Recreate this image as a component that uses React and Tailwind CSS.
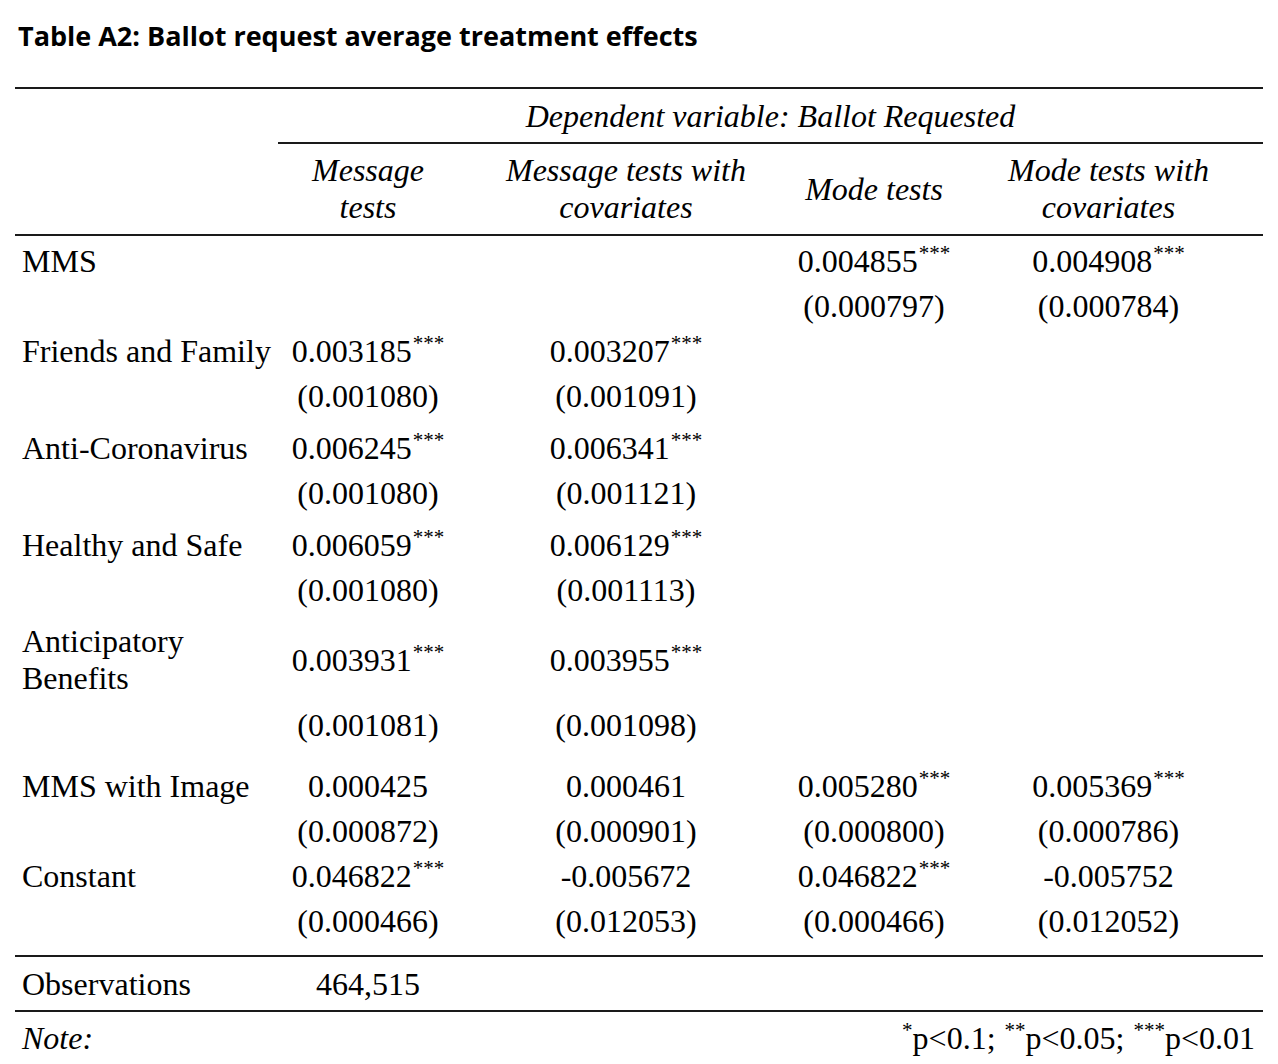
import React from 'react';

const serif = { fontFamily: '"Liberation Serif", "Times New Roman", serif' };

const cols = 'grid grid-cols-[263px_180px_336px_160px_309px] items-center';

const Stars = ({ n }) =>
  n ? <span className="text-[21px] relative -top-[12px] ml-[1px]">{'*'.repeat(n)}</span> : null;

const Cell = ({ v }) => {
  if (!v) return <div />;
  const [num, stars] = Array.isArray(v) ? v : [v, 0];
  return (
    <div className="text-center whitespace-nowrap">
      {num}
      <Stars n={stars} />
    </div>
  );
};

// one coefficient line + one standard error line
const Block = ({ label, coefs, ses, className = '' }) => (
  <div className={className}>
    <div className={`${cols} h-[45px]`}>
      <div className="pl-[7px] whitespace-nowrap">{label}</div>
      {coefs.map((c, i) => <Cell key={i} v={c} />)}
    </div>
    <div className={`${cols} h-[45px]`}>
      <div />
      {ses.map((c, i) => <Cell key={i} v={c} />)}
    </div>
  </div>
);

export default function App() {
  return (
    <div className="w-[1278px] h-[1064px] bg-white text-black overflow-hidden">
      {/* Title */}
      <div
        className="pt-[20px] pl-[18px] h-[52px] text-[27px] leading-[32px] font-bold"
        style={{ fontFamily: '"Open Sans", "Noto Sans", sans-serif' }}
      >
        Table A2: Ballot request average treatment effects
      </div>

      <div className="ml-[15px] mt-[35px] w-[1248px] text-[32px]" style={serif}>
        <div className="h-[2px] bg-[#1a1a1a]" />

        {/* Dependent variable */}
        <div className="flex h-[53px]">
          <div className="w-[263px]" />
          <div className="flex-1 flex items-center justify-center italic">
            Dependent variable: Ballot Requested
          </div>
        </div>
        <div className="ml-[263px] h-[2px] bg-[#1a1a1a]" />

        {/* Column headers */}
        <div className={`${cols} h-[90px] italic leading-[37px]`}>
          <div />
          <div className="text-center">Message<br />tests</div>
          <div className="text-center">Message tests with<br />covariates</div>
          <div className="text-center">Mode tests</div>
          <div className="text-center">Mode tests with<br />covariates</div>
        </div>
        <div className="h-[2px] bg-[#1a1a1a]" />

        <Block
          className="mt-[1px]"
          label="MMS"
          coefs={[null, null, ['0.004855', 3], ['0.004908', 3]]}
          ses={[null, null, '(0.000797)', '(0.000784)']}
        />
        <Block
          label="Friends and Family"
          coefs={[['0.003185', 3], ['0.003207', 3], null, null]}
          ses={['(0.001080)', '(0.001091)', null, null]}
        />
        <Block
          className="mt-[7px]"
          label="Anti-Coronavirus"
          coefs={[['0.006245', 3], ['0.006341', 3], null, null]}
          ses={['(0.001080)', '(0.001121)', null, null]}
        />
        <Block
          className="mt-[7px]"
          label="Healthy and Safe"
          coefs={[['0.006059', 3], ['0.006129', 3], null, null]}
          ses={['(0.001080)', '(0.001113)', null, null]}
        />

        {/* Anticipatory Benefits: wrapped label */}
        <div className={`${cols} h-[78px] mt-[10px]`}>
          <div className="pl-[7px] leading-[37px]">Anticipatory<br />Benefits</div>
          <Cell v={['0.003931', 3]} />
          <Cell v={['0.003955', 3]} />
          <div />
          <div />
        </div>
        <div className={`${cols} h-[45px] mt-[2px]`}>
          <div />
          <Cell v="(0.001081)" />
          <Cell v="(0.001098)" />
          <div />
          <div />
        </div>

        <Block
          className="mt-[16px]"
          label="MMS with Image"
          coefs={['0.000425', '0.000461', ['0.005280', 3], ['0.005369', 3]]}
          ses={['(0.000872)', '(0.000901)', '(0.000800)', '(0.000786)']}
        />
        <Block
          label="Constant"
          coefs={[['0.046822', 3], '-0.005672', ['0.046822', 3], '-0.005752']}
          ses={['(0.000466)', '(0.012053)', '(0.000466)', '(0.012052)']}
        />

        <div className="mt-[13px] h-[2px] bg-[#1a1a1a]" />
        <div className={`${cols} h-[53px]`}>
          <div className="pl-[7px]">Observations</div>
          <Cell v="464,515" />
        </div>
        <div className="h-[2px] bg-[#1a1a1a]" />

        {/* Note */}
        <div className="flex items-center justify-between h-[52px] pl-[7px] pr-[8px]">
          <span className="italic">Note:</span>
          <span>
            <Stars n={1} />p&lt;0.1; <Stars n={2} />p&lt;0.05; <Stars n={3} />p&lt;0.01
          </span>
        </div>
      </div>
    </div>
  );
}
